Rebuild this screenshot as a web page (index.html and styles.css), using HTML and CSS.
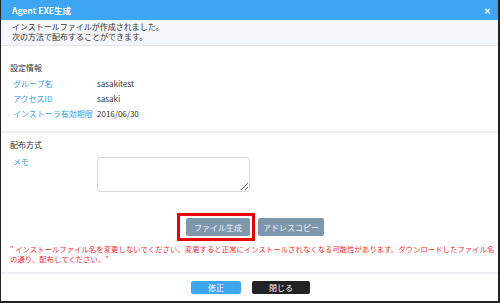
FILE: index.html
```html
<!DOCTYPE html>
<html lang="ja">
<head>
  <meta charset="UTF-8">
  <title>Agent EXE生成</title>
  <link rel="stylesheet" href="styles.css">
</head>
<body>

<div class="dialog">
  <div class="dialog-head">
    <span class="dialog-title">Agent EXE生成</span>
    <span class="close">&#x2715;</span>
  </div>

  <div class="notice">
    インストールファイルが作成されました。<br>
    次の方法で配布することができます。
  </div>

  <div class="section section-info">
    <div class="section-title">設定情報</div>
    <div class="row"><span class="label">グループ名</span><span class="value">sasakitest</span></div>
    <div class="row"><span class="label">アクセスID</span><span class="value">sasaki</span></div>
    <div class="row"><span class="label">インストーラ有効期限</span><span class="value">2016/06/30</span></div>
  </div>

  <div class="section section-dist">
    <div class="section-title">配布方式</div>
    <div class="row memo-row">
      <span class="label">メモ</span>
      <textarea class="memo"></textarea>
    </div>
    <div class="actions">
      <span class="highlight"><button class="btn btn-grey btn-make">ファイル生成</button></span>
      <button class="btn btn-grey btn-copy">アドレスコピー</button>
    </div>
    <p class="warning">" インストールファイル名を変更しないでください。変更すると正常にインストールされなくなる可能性があります。ダウンロードしたファイル名の通り、配布してください。"</p>
  </div>

  <div class="dialog-foot">
    <button class="btn btn-blue">修正</button>
    <button class="btn btn-dark">閉じる</button>
  </div>
</div>

</body>
</html>
```

FILE: styles.css
```css
body {
  margin: 0;
  font-family: "Noto Sans CJK JP", "Noto Sans", sans-serif;
  font-size: 8px;
  color: #333;
}
.dialog {
  width: 500px;
  height: 303px;
  box-sizing: border-box;
  border: 1px solid #222;
  border-top: none;
  border-right-width: 2px;
  border-bottom-width: 2px;
  display: flex;
  flex-direction: column;
  background: #fff;
  overflow: hidden;
}
.dialog-head {
  height: 20px;
  flex: none;
  background: #3ea6f0;
  color: #fff;
  display: flex;
  align-items: center;
  justify-content: space-between;
  padding: 0 7px 0 11px;
}
.dialog-title {
  font-weight: bold;
  font-size: 8.5px;
}
.close {
  font-size: 8px;
  font-weight: bold;
}
.notice {
  flex: none;
  height: 26px;
  box-sizing: border-box;
  background: #f3f6fb;
  border-bottom: 1px solid #e3e6eb;
  padding: 2px 11px 0;
  line-height: 10px;
}
.section {
  flex: none;
  padding: 15px 9px 0;
  border-bottom: 2px solid #eeeff2;
}
.section-info {
  height: 87px;
  box-sizing: border-box;
}
.section-title {
  line-height: 14px;
  margin-bottom: 1px;
}
.row {
  display: flex;
  line-height: 15px;
  padding-left: 3px;
}
.label {
  width: 84px;
  color: #3d9cf0;
}
.section-dist {
  height: 141px;
  box-sizing: border-box;
  padding-top: 5px;
}
.memo-row {
  align-items: flex-start;
}
.memo-row .label {
  margin-top: 1px;
}
.memo {
  width: 153px;
  height: 35px;
  box-sizing: border-box;
  border: 1px solid #d8dde3;
  border-radius: 3px;
  margin: 4px 0 0;
  resize: both;
}
.actions {
  display: flex;
  justify-content: center;
  align-items: center;
  gap: 3px;
  margin-top: 21px;
  padding-left: 2px;
}
.highlight {
  border: 3px solid #e8000b;
  padding: 2px 2px 2px 6px;
  display: flex;
}
.btn {
  font-family: inherit;
  font-size: 8px;
  border: none;
  border-radius: 2px;
  height: 18px;
  padding: 0;
  cursor: pointer;
}
.btn-grey {
  background: #7f97ad;
  color: #eef2f6;
}
.btn-make {
  width: 64px;
}
.btn-copy {
  width: 66px;
}
.warning {
  margin: 3px -6px 0 0;
  color: #f0302f;
  line-height: 10px;
  font-size: 7.4px;
}
.dialog-foot {
  flex: 1;
  display: flex;
  justify-content: center;
  align-items: center;
  gap: 11px;
  padding-left: 2px;
}
.btn-blue {
  background: #3ea6f0;
  color: #fff;
  width: 50px;
  height: 13px;
  line-height: 13px;
}
.btn-dark {
  background: #222;
  color: #fff;
  width: 58px;
  height: 13px;
  line-height: 13px;
}
```
